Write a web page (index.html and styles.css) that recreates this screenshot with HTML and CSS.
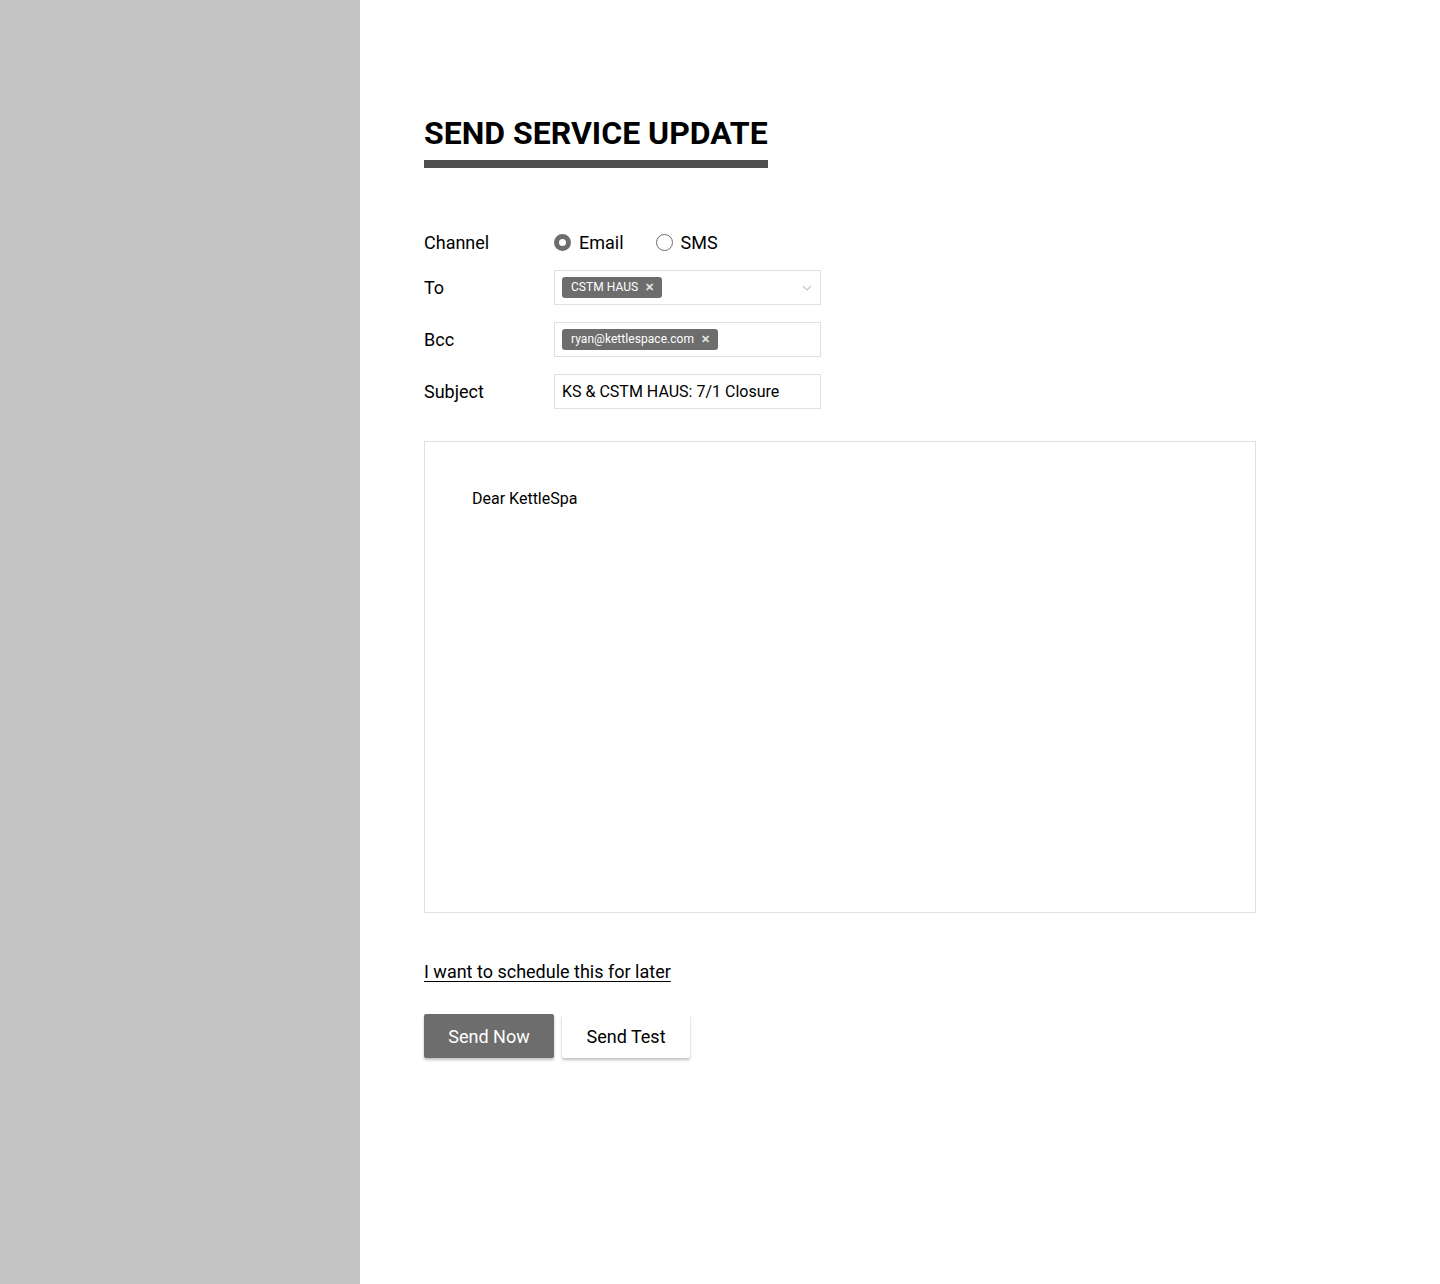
FILE: index.html
```html
<!DOCTYPE html>
<html>
<head>
<meta charset="utf-8">
<link rel="stylesheet" href="styles.css">
</head>
<body>
<div class="page">
  <aside class="sidebar"></aside>
  <main class="content">
    <h1 class="title">SEND SERVICE UPDATE</h1>
    <form class="form">
      <div class="row row-channel">
        <div class="label">Channel</div>
        <div class="radios">
          <label class="radio"><span class="dot checked"></span>Email</label>
          <label class="radio"><span class="dot"></span>SMS</label>
        </div>
      </div>
      <div class="row">
        <div class="label">To</div>
        <div class="field">
          <span class="chip">CSTM HAUS <span class="x">✕</span></span>
          <svg class="chev" width="10" height="6" viewBox="0 0 10 6"><path d="M1 1l4 4 4-4" fill="none" stroke="#c8c8c8" stroke-width="1.2"/></svg>
        </div>
      </div>
      <div class="row">
        <div class="label">Bcc</div>
        <div class="field">
          <span class="chip">ryan@kettlespace.com <span class="x">✕</span></span>
        </div>
      </div>
      <div class="row">
        <div class="label">Subject</div>
        <div class="field text">KS &amp; CSTM HAUS: 7/1 Closure</div>
      </div>
    </form>
    <div class="editor">Dear KettleSpa</div>
    <a class="later" href="#">I want to schedule this for later</a>
    <div class="buttons">
      <button class="btn primary" type="button">Send Now</button>
      <button class="btn secondary" type="button">Send Test</button>
    </div>
  </main>
</div>
</body>
</html>
```
FILE: styles.css
```css
* { box-sizing: border-box; }
html, body { margin: 0; padding: 0; }
body { font-family: Roboto, "Liberation Sans", sans-serif; color: #000; background: #fff; }
.page { display: flex; min-height: 1284px; }
.sidebar { width: 360px; flex: none; background: #c4c4c4; }
.content { flex: 1; padding: 114px 0 0 64px; }
.title {
  display: inline-block;
  margin: 0;
  font-size: 32px;
  font-weight: 700;
  line-height: 38px;
  padding-bottom: 8px;
  border-bottom: 8px solid #505050;
}
.form { margin-top: 61px; display: flex; flex-direction: column; gap: 17px; }
.row { display: flex; align-items: center; }
.row-channel { height: 26px; margin-bottom: -2px; }
.label { width: 130px; font-size: 18px; }
.radios { display: flex; gap: 32px; }
.radio { display: flex; align-items: center; font-size: 18px; gap: 8px; }
.dot { width: 17px; height: 17px; border-radius: 50%; border: 1px solid #6d6d6d; display: inline-block; }
.dot.checked { border: 5px solid #6d6d6d; }
.field {
  width: 267px; height: 35px;
  border: 1px solid #e0e0e0;
  display: flex; align-items: center;
  padding: 0 7px;
  position: relative;
}
.field.text { font-size: 16px; }
.chip {
  background: #6d6d6d; color: #fff; font-size: 12px;
  height: 21px; line-height: 21px; border-radius: 3px;
  padding: 0 8px 0 9px; display: inline-flex; align-items: center; gap: 7px;
  letter-spacing: 0.05px;
}
.chip .x { font-size: 11px; font-weight: 700; color: #e6e6e6; }
.chev { position: absolute; right: 8px; top: 14px; }
.editor {
  margin-top: 32px;
  width: 832px; height: 472px;
  border: 1px solid #e0e0e0;
  padding: 47px 47px;
  font-size: 16px;
}
.later {
  display: inline-block; margin-top: 48px;
  font-size: 18px; color: #000; text-decoration: underline;
  text-underline-offset: 3px;
}
.buttons { display: flex; gap: 8px; margin-top: 32px; }
.btn {
  height: 44px; border: none; border-radius: 2px;
  font-family: Roboto, "Liberation Sans", sans-serif; font-size: 18px;
  box-shadow: 0 2px 3px rgba(0,0,0,0.25);
}
.btn.primary { width: 130px; background: #6d6d6d; color: #fff; }
.btn.secondary { width: 128px; background: #fff; color: #000; }
```
